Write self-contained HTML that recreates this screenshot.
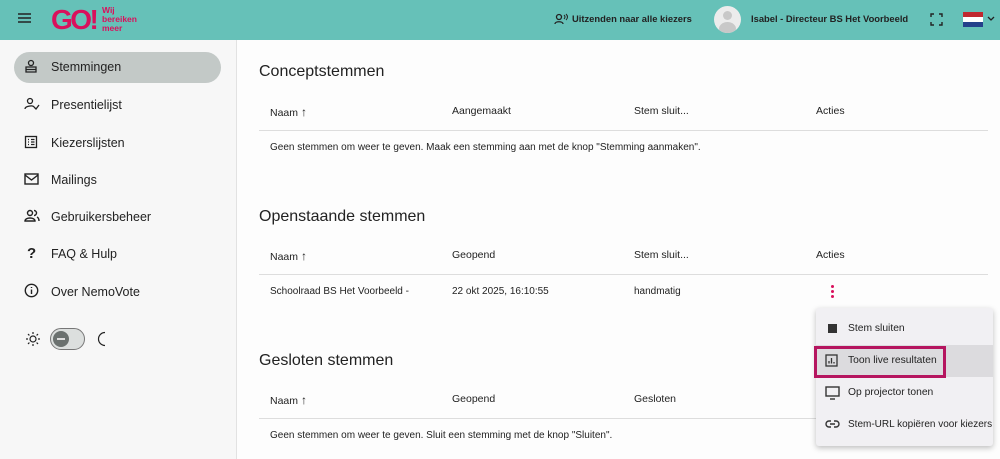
<!DOCTYPE html>
<html><head><meta charset="utf-8"><style>
*{box-sizing:border-box;margin:0;padding:0}
body{width:1000px;height:459px;overflow:hidden;font-family:"Liberation Sans",Arial,sans-serif;background:#fdfdfd;color:#222;position:relative}
.hdr{position:absolute;left:0;top:0;width:1000px;height:40px;background:#66c1b8}
.side{position:absolute;left:0;top:40px;width:237px;height:419px;background:#f7f7f7;border-right:1px solid #e2e2e2}
.abs{position:absolute;white-space:nowrap}
.nav{position:absolute;left:51px;font-size:12.5px;color:#222}
.ico{position:absolute;left:24px}
h2{position:absolute;left:259px;font-size:16px;font-weight:normal;color:#222}
.th{position:absolute;font-size:10.5px;color:#222;white-space:nowrap}
.td{position:absolute;font-size:10px;color:#222;white-space:nowrap}
.line{position:absolute;left:259px;width:729px;height:1px;background:#ddd}
.menu{position:absolute;left:816px;top:308px;width:177px;height:138px;background:#f1f0f3;box-shadow:0 2px 6px rgba(0,0,0,.25);border-radius:3px}
.mi{position:absolute;left:32px;font-size:10.3px;color:#222;white-space:nowrap}
</style></head><body>
<div class="hdr">
 <svg class="abs" style="left:18px;top:13px" width="13" height="10"><path d="M0 1h13M0 5h13M0 9h13" stroke="#222" stroke-width="1.6"/></svg>
 <div class="abs" style="left:51px;top:4px;font-size:28px;font-weight:bold;color:#d9105c;letter-spacing:-2.5px">GO!</div>
 <div class="abs" style="left:102px;top:6px;font-size:8.5px;font-weight:bold;color:#d9105c;line-height:9px">Wij<br>bereiken<br>meer</div>
 <svg class="abs" style="left:554px;top:13px" width="14" height="12" viewBox="0 0 14 12"><circle cx="5" cy="4" r="2.5" fill="none" stroke="#222" stroke-width="1.3"/><path d="M1 11c0-3 8-3 8 0" fill="none" stroke="#222" stroke-width="1.3"/><path d="M10 2q2 2 0 4M12 1q3 3 0 6" fill="none" stroke="#222" stroke-width="1"/></svg>
 <div class="abs" style="left:572px;top:13px;font-size:9.4px;font-weight:bold;color:#222">Uitzenden naar alle kiezers</div>
 <div class="abs" style="left:714px;top:6px;width:27px;height:27px;border-radius:50%;background:#ececec;overflow:hidden"><div class="abs" style="left:9px;top:5px;width:9px;height:9px;border-radius:50%;background:#c8c8c8"></div><div class="abs" style="left:5px;top:16px;width:17px;height:14px;border-radius:50%;background:#c8c8c8"></div></div>
 <div class="abs" style="left:751px;top:13px;font-size:9.4px;font-weight:bold;color:#222">Isabel - Directeur BS Het Voorbeeld</div>
 <svg class="abs" style="left:930px;top:13px" width="13" height="13" viewBox="0 0 13 13" fill="none" stroke="#222" stroke-width="1.4"><path d="M1 4V1h3M9 1h3v3M12 9v3H9M4 12H1V9"/></svg>
 <div class="abs" style="left:963px;top:12px;width:20px;height:5px;background:#c0282f"></div>
 <div class="abs" style="left:963px;top:17px;width:20px;height:5px;background:#fff"></div>
 <div class="abs" style="left:963px;top:22px;width:20px;height:5px;background:#24418b"></div>
 <svg class="abs" style="left:987px;top:16px" width="8" height="6" viewBox="0 0 8 6"><path d="M1 1l3 3 3-3" fill="none" stroke="#222" stroke-width="1.3"/></svg>
</div>
<div class="side">
 <div class="abs" style="left:14px;top:12px;width:207px;height:31px;border-radius:16px;background:#c3c9c7"></div>
 <svg class="ico" style="top:19px" width="14" height="14" viewBox="0 0 14 14" fill="none" stroke="#222" stroke-width="1.3"><circle cx="7" cy="4" r="2.5"/><path d="M2 8h10v5H2zM2 10.5h10"/></svg>
 <div class="nav" style="top:20px">Stemmingen</div>
 <svg class="ico" style="top:57px" width="16" height="14" viewBox="0 0 16 14" fill="none" stroke="#222" stroke-width="1.3"><circle cx="6" cy="4" r="2.5"/><path d="M1 12c0-3 8-4 9-2M10 10l2 2 3-4"/></svg>
 <div class="nav" style="top:58px">Presentielijst</div>
 <svg class="ico" style="top:95px" width="14" height="14" viewBox="0 0 14 14" fill="none" stroke="#222" stroke-width="1.3"><rect x="1.5" y="1.5" width="11" height="11"/><path d="M4 4.5h1M7 4.5h3.5M4 7h1M7 7h3.5M4 9.5h1M7 9.5h3.5"/></svg>
 <div class="nav" style="top:96px">Kiezerslijsten</div>
 <svg class="ico" style="top:133px" width="15" height="12" viewBox="0 0 15 12" fill="none" stroke="#222" stroke-width="1.4"><rect x="1" y="1" width="13" height="10"/><path d="M1 2l6.5 5 6.5-5"/></svg>
 <div class="nav" style="top:133px">Mailings</div>
 <svg class="ico" style="top:169px" width="16" height="14" viewBox="0 0 16 14" fill="none" stroke="#222" stroke-width="1.4"><circle cx="6" cy="4" r="2.5"/><path d="M1 12c0-4 10-4 10 0zM10 1.5a2.5 2.5 0 010 5M13 8q2 1 2 4"/></svg>
 <div class="nav" style="top:170px">Gebruikersbeheer</div>
 <div class="abs" style="left:27px;top:205px;font-size:15px;font-weight:bold;color:#222">?</div>
 <div class="nav" style="top:207px">FAQ &amp; Hulp</div>
 <svg class="ico" style="top:243px" width="15" height="15" viewBox="0 0 15 15" fill="none" stroke="#222" stroke-width="1.4"><circle cx="7.5" cy="7.5" r="6.2"/><path d="M7.5 6.5v4.5M7.5 4v1"/></svg>
 <div class="nav" style="top:245px">Over NemoVote</div>
 <svg class="ico" style="left:25px;top:291px" width="16" height="16" viewBox="0 0 16 16" fill="none" stroke="#222" stroke-width="1.2"><circle cx="8" cy="8" r="3"/><path d="M8 1v2M8 13v2M1 8h2M13 8h2M3 3l1.4 1.4M11.6 11.6L13 13M3 13l1.4-1.4M11.6 4.4L13 3"/></svg>
 <div class="abs" style="left:50px;top:288px;width:35px;height:22px;border-radius:11px;background:#dcdfde;border:1.5px solid #777"></div>
 <div class="abs" style="left:53px;top:291px;width:16px;height:16px;border-radius:50%;background:#6b716f"></div>
 <div class="abs" style="left:57px;top:298px;width:8px;height:1.5px;background:#ddd"></div>
 <svg class="abs" style="left:96px;top:291px" width="12" height="16" viewBox="0 0 12 16"><path d="M9 1.5a6.5 6.5 0 000 13A6.5 6.5 0 119 1.5z" fill="none" stroke="#222" stroke-width="1.2"/></svg>
</div>

<h2 style="top:63px">Conceptstemmen</h2>
<div class="th" style="left:270px;top:105px">Naam <b style="font-size:12px">↑</b></div>
<div class="th" style="left:452px;top:105px">Aangemaakt</div>
<div class="th" style="left:634px;top:105px">Stem sluit...</div>
<div class="th" style="left:816px;top:105px">Acties</div>
<div class="line" style="top:130px"></div>
<div class="td" style="left:270px;top:142px">Geen stemmen om weer te geven. Maak een stemming aan met de knop "Stemming aanmaken".</div>

<h2 style="top:208px">Openstaande stemmen</h2>
<div class="th" style="left:270px;top:249px">Naam <b style="font-size:12px">↑</b></div>
<div class="th" style="left:452px;top:249px">Geopend</div>
<div class="th" style="left:634px;top:249px">Stem sluit...</div>
<div class="th" style="left:816px;top:249px">Acties</div>
<div class="line" style="top:274px"></div>
<div class="td" style="left:270px;top:286px">Schoolraad BS Het Voorbeeld -</div>
<div class="td" style="left:452px;top:286px">22 okt 2025, 16:10:55</div>
<div class="td" style="left:634px;top:286px">handmatig</div>
<div class="abs" style="left:831px;top:285px;width:3px;height:3px;border-radius:50%;background:#d9105c;box-shadow:0 5px 0 #d9105c,0 10px 0 #d9105c"></div>

<h2 style="top:352px">Gesloten stemmen</h2>
<div class="th" style="left:270px;top:393px">Naam <b style="font-size:12px">↑</b></div>
<div class="th" style="left:452px;top:393px">Geopend</div>
<div class="th" style="left:634px;top:393px">Gesloten</div>
<div class="line" style="top:418px"></div>
<div class="td" style="left:270px;top:430px">Geen stemmen om weer te geven. Sluit een stemming met de knop "Sluiten".</div>

<div class="menu">
 <div class="abs" style="left:12px;top:16px;width:9px;height:9px;background:#333"></div>
 <div class="mi" style="top:15px">Stem sluiten</div>
 <div class="abs" style="left:0;top:37px;width:177px;height:32px;background:#dcdbde"></div>
 <div class="abs" style="left:-2px;top:38px;width:132px;height:32px;border:3px solid #b5155f"></div>
 <svg class="abs" style="left:9px;top:46px" width="13" height="13" viewBox="0 0 13 13" fill="none" stroke="#333" stroke-width="1.3"><rect x="1" y="1" width="11" height="11"/><path d="M4 9.5V7M6.5 9.5V4M9 9.5V8"/></svg>
 <div class="mi" style="top:47px">Toon live resultaten</div>
 <svg class="abs" style="left:9px;top:78px" width="15" height="14" viewBox="0 0 15 14" fill="none" stroke="#333" stroke-width="1.4"><rect x="1" y="1" width="13" height="9"/><path d="M5 13h5"/></svg>
 <div class="mi" style="top:79px">Op projector tonen</div>
 <svg class="abs" style="left:9px;top:112px" width="15" height="8" viewBox="0 0 15 8" fill="none" stroke="#333" stroke-width="1.4"><path d="M6 1H4a3 3 0 000 6h2M9 1h2a3 3 0 010 6H9M5 4h5"/></svg>
 <div class="mi" style="top:111px;font-size:10px">Stem-URL kopiëren voor kiezers</div>
</div>
</body></html>
